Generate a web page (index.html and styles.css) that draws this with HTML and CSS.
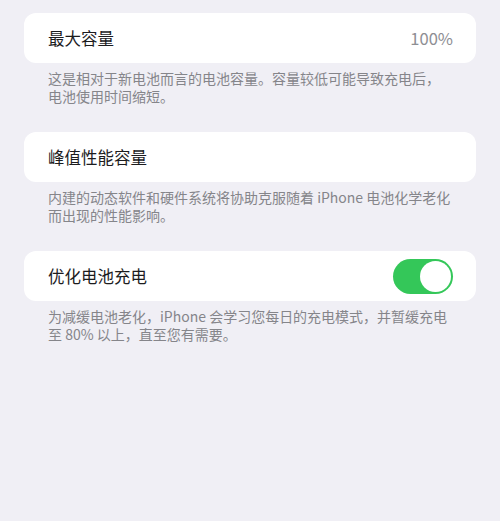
FILE: index.html
```html
<!DOCTYPE html>
<html lang="zh-CN">
<head>
    <meta charset="UTF-8">
    <meta name="viewport" content="width=device-width, initial-scale=1.0">
    <title>电池健康</title>
    <link rel="stylesheet" href="styles.css">
</head>
<body>

    <div class="ajustes">
        <div class="grupo">
            <div class="fila">
                <span class="titulo">最大容量</span>
                <span class="valor">100%</span>
            </div>
            <p class="nota">这是相对于新电池而言的电池容量。容量较低可能导致充电后，<br>电池使用时间缩短。</p>
        </div>

        <div class="grupo">
            <div class="fila">
                <span class="titulo">峰值性能容量</span>
            </div>
            <p class="nota">内建的动态软件和硬件系统将协助克服随着 iPhone 电池化学老化<br>而出现的性能影响。</p>
        </div>

        <div class="grupo">
            <div class="fila">
                <span class="titulo">优化电池充电</span>
                <div class="interruptor encendido"><div class="perilla"></div></div>
            </div>
            <p class="nota">为减缓电池老化，iPhone 会学习您每日的充电模式，并暂缓充电<br>至 80% 以上，直至您有需要。</p>
        </div>
    </div>

</body>
</html>
```

FILE: styles.css
```css
body {
    font-family: "Noto Sans CJK SC", "Noto Sans", sans-serif;
    background-color: #f0eff5;
    margin: 0;
    height: 100vh;
}

.ajustes {
    padding: 13px 24px 0 24px;
}

.grupo {
    margin-bottom: 27px;
}

.fila {
    background-color: #fff;
    border-radius: 12px;
    height: 50px;
    padding: 0 23px 0 24px;
    display: flex;
    align-items: center;
    justify-content: space-between;
}

.titulo {
    font-size: 16.5px;
    color: #1c1c1e;
}

.valor {
    font-size: 16.5px;
    color: #8e8e93;
}

.nota {
    margin: 6px 0 0 0;
    padding: 0 24px;
    font-size: 14px;
    line-height: 18px;
    color: #85858a;
}

.interruptor {
    width: 60px;
    height: 35px;
    border-radius: 18px;
    background-color: #e5e5ea;
    display: flex;
    align-items: center;
    padding: 2px;
    box-sizing: border-box;
}

.interruptor.encendido {
    background-color: #34c759;
    justify-content: flex-end;
}

.perilla {
    width: 31px;
    height: 31px;
    border-radius: 50%;
    background-color: #fff;
}
```
